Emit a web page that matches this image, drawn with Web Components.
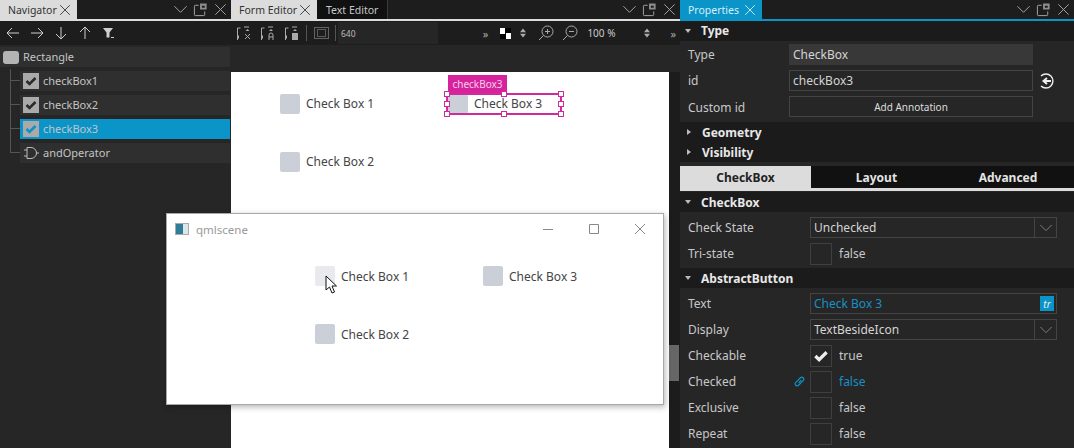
<!DOCTYPE html>
<html lang="en">
<head>
<meta charset="utf-8">
<title>Qt Design Studio</title>
<style>
  html, body { margin: 0; padding: 0; background: #1c1c1c; }
  body { width: 1074px; height: 448px; overflow: hidden; position: relative; font-family: "Noto Sans", "Liberation Sans", sans-serif; }
  #app { display: flex; height: 448px; }
</style>
</head>
<body>
<div id="app">
  <dock-panel style="width:231px">
    <dock-header slot="header" tab="Navigator" tone="light"></dock-header>
    <div style="display:flex;align-items:center;gap:8px;height:24px;padding-left:5px;background:#1d1d1d;flex:none" slot="tools">
      <ui-icon name="left"></ui-icon><ui-icon name="right"></ui-icon><ui-icon name="down"></ui-icon><ui-icon name="up"></ui-icon><ui-icon name="filter"></ui-icon>
    </div>
    <nav-tree>
      <nav-row root label="Rectangle"></nav-row>
      <nav-row icon="check" first label="checkBox1"></nav-row>
      <nav-row icon="check" label="checkBox2"></nav-row>
      <nav-row icon="check" selected label="checkBox3"></nav-row>
      <nav-row icon="gate" label="andOperator"></nav-row>
    </nav-tree>
  </dock-panel>

  <form-editor></form-editor>

  <dock-panel style="width:394px">
    <dock-header slot="header" tab="Properties" tone="blue"></dock-header>
    <prop-section label="Type" open style="--name-shift:-1px">
      <prop-row label="Type"><prop-field kind="plain" style="width:244px">CheckBox</prop-field></prop-row>
      <prop-row label="id"><prop-field style="width:244px">checkBox3</prop-field><ui-icon name="bind" size="20" style="margin-left:4px;color:#eee"></ui-icon></prop-row>
      <prop-row label="Custom id" style="--label-shift:1px"><prop-field kind="button" style="width:244px">Add Annotation</prop-field></prop-row>
    </prop-section>
    <prop-section label="Geometry"></prop-section>
    <prop-section label="Visibility"></prop-section>
    <prop-tabs></prop-tabs>
    <prop-section label="CheckBox" open wide>
      <prop-row label="Check State" wide><prop-field kind="combo" style="width:247px">Unchecked</prop-field></prop-row>
      <prop-row label="Tri-state" wide><prop-check>false</prop-check></prop-row>
    </prop-section>
    <prop-section label="AbstractButton" open wide>
      <prop-row label="Text" wide><prop-field kind="tr" style="width:247px">Check Box 3</prop-field></prop-row>
      <prop-row label="Display" wide><prop-field kind="combo" style="width:247px">TextBesideIcon</prop-field></prop-row>
      <prop-row label="Checkable" wide><prop-check checked>true</prop-check></prop-row>
      <prop-row label="Checked" wide linked><prop-check bound>false</prop-check></prop-row>
      <prop-row label="Exclusive" wide><prop-check>false</prop-check></prop-row>
      <prop-row label="Repeat" wide><prop-check>false</prop-check></prop-row>
    </prop-section>
  </dock-panel>
</div>
<qml-window></qml-window>

<script>
const ICONS = {
  left: '<path d="M14 8H2M7 3L2 8l5 5" fill="none" stroke="currentColor"/>',
  right: '<path d="M2 8h12M9 3l5 5-5 5" fill="none" stroke="currentColor"/>',
  down: '<path d="M8 2v12M3 9l5 5 5-5" fill="none" stroke="currentColor"/>',
  up: '<path d="M8 14V2M3 7l5-5 5 5" fill="none" stroke="currentColor"/>',
  filter: '<path d="M2 3h10L8.500 7.500v5h-3v-5z" fill="currentColor"/><path d="M10 12.500h3" stroke="currentColor"/>',
  chevron: '<path d="M1.500 4.500L8 11l6.500-6.500" fill="none" stroke="currentColor"/>',
  undock: '<path d="M6 3.500H2.500a1 1 0 0 0-1 1v9a1 1 0 0 0 1 1h9a1 1 0 0 0 1-1V10" fill="none" stroke="currentColor"/><path d="M7.500 1.500h7v6.500h-7zM9.500 4v2h3V4z" fill="currentColor" fill-rule="evenodd" opacity=".8"/>',
  close: '<path d="M2.500 2.500l11 11M13.500 2.500l-11 11" fill="none" stroke="currentColor"/>',
  check: '<path d="M3.500 8L6.500 11L12.500 5" fill="none" stroke="currentColor" stroke-width="2.600"/>',
  gate: '<path d="M1 5h3M1 11h3M13 8h3M4 2.500h4a5.500 5.500 0 0 1 0 11H4z" fill="none" stroke="currentColor"/>',
  bind: '<path d="M4 5a7 7 0 1 1 0 10" fill="none" stroke="currentColor" stroke-width="1.400"/><path d="M14 10H7M10 7l-3.500 3 3.500 3" fill="none" stroke="currentColor" stroke-width="2"/>',
  link: '<path d="M7 9.500l3-3M6.500 6.500l-2.500 2.500a2 2 0 0 0 3 3l2.500-2.500M9.500 9.500l2.500-2.500a2 2 0 0 0-3-3L6.500 6.500" fill="none" stroke="currentColor" stroke-width="1.300"/>',
  zoomin: '<circle cx="9.500" cy="6.500" r="5.500" fill="none" stroke="currentColor"/><path d="M5.500 10.500L1 15M7 6.500h5M9.500 4v5" fill="none" stroke="currentColor"/>',
  zoomout: '<circle cx="9.500" cy="6.500" r="5.500" fill="none" stroke="currentColor"/><path d="M5.500 10.500L1 15M7 6.500h5" fill="none" stroke="currentColor"/>',
  updown: '<path d="M8 2l4 5H4zM8 14l4-5H4z" fill="currentColor"/>',
  anchorx: '<path d="M1.500 15V3h3M8 2h5M9 9l5 5M14 9l-5 5" fill="none" stroke="currentColor"/><path d="M11.500 4l2 2h-4zM1 12l2-2v4z" fill="currentColor"/>',
  anchora: '<path d="M1.500 15V3h3M8 2h5M9 15v-5a2 2 0 0 1 4 0v5M9 12h4" fill="none" stroke="currentColor"/><path d="M11 4l2 2H9zM1 12l2-2v4z" fill="currentColor"/>',
  anchorb: '<path d="M1.500 15V3h3M8 2h5" fill="none" stroke="currentColor"/><path d="M8 8h6v7H8zM11 4l2 2H9zM1 12l2-2v4z" fill="currentColor"/>',
  frame: '<path d="M4.500 4.500h8v7h-8z" fill="none" stroke="currentColor" opacity=".45"/><path d="M1.500 2.500h14v11h-14z" fill="none" stroke="currentColor" stroke-dasharray="1 1"/>'
};

class UiIcon extends HTMLElement {
  connectedCallback() {
    const size = this.getAttribute('size') || 16;
    const viewBox = this.getAttribute('name') === 'bind' ? '0 0 20 20' : '0 0 16 16';
    this.attachShadow({ mode: 'open' }).innerHTML = `
      <style>:host { display: inline-flex; flex: none; color: #cfcfcf; } svg { display: block; }</style>
      <svg width="${size}" height="${size}" viewBox="${viewBox}">${ICONS[this.getAttribute('name')] || ''}</svg>`;
  }
}

// dock panel with header, tool strip and content
class DockPanel extends HTMLElement {
  constructor() {
    super();
    this.attachShadow({ mode: 'open' }).innerHTML = `
      <style>
        :host { display: flex; flex-direction: column; flex: none; height: 448px; background: #262626; box-sizing: border-box; overflow: hidden; }
      </style>
      <slot name="header"></slot><slot name="tools"></slot><slot></slot>`;
  }
}

class DockHeader extends HTMLElement {
  connectedCallback() {
    const blue = this.getAttribute('tone') === 'blue';
    const extra = this.getAttribute('extra');
    const width = this.getAttribute('tab') === 'Navigator' ? 77 : this.getAttribute('tab') === 'Form Editor' ? 86 : 82;
    this.attachShadow({ mode: 'open' }).innerHTML = `
      <style>
        :host { display: flex; align-items: stretch; flex: none; height: 21px; box-sizing: border-box; background: #1d1d1d; border-bottom: 2px solid ${blue ? '#0a94c8' : '#dcdcdc'}; font-size: 10.500px; }
        .tab { display: flex; align-items: center; justify-content: space-between; box-sizing: border-box; width: ${width}px; padding: 0 5px 0 8px; background: ${blue ? '#0a94c8' : '#dcdcdc'}; color: ${blue ? '#d8eef8' : '#333'}; }
        .tab ui-icon { color: inherit; }
        .other { display: flex; align-items: center; padding: 0 9px 0 9px; background: #111; color: #c8c8c8; border-right: 1px solid #3a3a3a; }
        .gap { flex: 1; }
        .ctl { display: flex; align-items: center; gap: 5px; padding-right: 3px; }
        .ctl ui-icon { color: #aaa; }
      </style>
      <div class="tab"><span>${this.getAttribute('tab')}</span><ui-icon name="close" size="14"></ui-icon></div>
      ${extra ? `<div class="other">${extra}</div>` : ''}
      <div class="gap"></div>
      <div class="ctl"><ui-icon name="chevron" size="15"></ui-icon><ui-icon name="undock" size="15"></ui-icon><ui-icon name="close" size="15"></ui-icon></div>`;
  }
}

class NavTree extends HTMLElement {
  constructor() {
    super();
    this.attachShadow({ mode: 'open' }).innerHTML = `
      <style>:host { display: flex; flex-direction: column; gap: 4px; padding-top: 2px; }</style><slot></slot>`;
  }
}

class NavRow extends HTMLElement {
  connectedCallback() {
    const root = this.hasAttribute('root');
    const selected = this.hasAttribute('selected');
    const first = this.hasAttribute('first');
    const icon = this.getAttribute('icon');
    const iconHtml = root ? '<span class="rect"></span>'
      : icon === 'check' ? `<span class="cb"><ui-icon name="check" size="16" style="color:${selected ? '#0a94c8' : '#2b2b2b'}"></ui-icon></span>`
      : '<span class="ic"><ui-icon name="gate" size="16" style="color:#bbb"></ui-icon></span>';
    this.attachShadow({ mode: 'open' }).innerHTML = `
      <style>
        :host { display: flex; align-items: center; height: 20px; position: relative; font-size: 11px; color: #c4c4c4; margin-left: ${root ? 0 : 20}px; margin-right: 1px; box-sizing: border-box; padding-left: 3px; background: ${selected ? '#0a94c8' : '#2f2f2f'}; }
        .rect { width: 16px; height: 13px; border-radius: 3px; background: #b4b4b4; }
        .cb { width: 16px; height: 16px; background: #aaa; display: flex; }
        .ic { width: 16px; height: 16px; }
        .lbl { margin-left: 4px; margin-top: -2px; }
        .tree { position: absolute; left: -10px; top: ${first ? -2 : -14}px; width: 10px; height: ${first ? 12 : 24}px; border-left: 1px solid #555; border-bottom: 1px solid #555; box-sizing: border-box; }
      </style>
      ${root ? '' : '<span class="tree"></span>'}
      ${iconHtml}<span class="lbl">${this.getAttribute('label')}</span>`;
  }
}

class CanvasItem extends HTMLElement {
  connectedCallback() {
    this.attachShadow({ mode: 'open' }).innerHTML = `
      <style>
        :host { display: flex; align-items: center; gap: 6px; font-size: 12px; color: #444; font-family: "Noto Sans", sans-serif; white-space: nowrap; }
        .box { width: 20px; height: 20px; border-radius: 2px; background: ${this.hasAttribute('pressed') ? '#e8eaed' : '#cbd0d8'}; }
        .txt { margin-top: var(--txt-shift, -1px); }
      </style>
      <span class="box"></span><span class="txt"><slot></slot></span>`;
  }
}

class SelectionBox extends HTMLElement {
  connectedCallback() {
    const spots = [[0,0],[50,0],[100,0],[0,50],[100,50],[0,100],[50,100],[100,100]];
    const handles = spots.map(([x, y]) => `<i style="left:calc(${x}% + ${x / 50 - 1}px);top:calc(${y}% + ${y / 50 - 1}px)"></i>`).join('');
    this.attachShadow({ mode: 'open' }).innerHTML = `
      <style>
        :host { position: absolute; box-sizing: border-box; border: 2px solid #cf2a9e; }
        i { position: absolute; width: 6px; height: 6px; margin: -3px 0 0 -3px; background: #fff; border: 1px solid #cf2a9e; box-sizing: border-box; }
        .tag { position: absolute; left: 0; top: -20px; height: 18px; width: 59px; background: #d6239c; color: #f6cfe8; font-size: 10px; display: flex; align-items: center; justify-content: center; }
      </style>
      <span class="tag">${this.getAttribute('label')}</span>${handles}`;
  }
}

class FormEditor extends HTMLElement {
  constructor() {
    super();
    this.attachShadow({ mode: 'open' }).innerHTML = `
      <style>
        :host { display: flex; flex-direction: column; flex: none; width: 449px; height: 448px; background: #262626; }
        .tools { display: flex; align-items: center; height: 24px; flex: none; background: #1d1d1d; padding-left: 5px; box-sizing: border-box; }
        .tools ui-icon { color: #aaa; }
        .group { display: flex; gap: 8px; align-items: center; }
        .sep { width: 1px; height: 16px; background: #555; margin: 0 6px; }
        .num { font-size: 8.500px; color: #bbb; background: #262626; width: 100px; height: 22px; display: flex; align-items: center; padding-left: 3px; box-sizing: border-box; }
        .gap { flex: 1; }
        .chev { font-size: 11px; color: #aaa; }
        .bw { width: 11px; height: 11px; margin: 0 6px 0 12px; background: conic-gradient(#000 0 25%, #fff 0 50%, #000 0 75%, #fff 0); }
        .pct { font-size: 10px; color: #ccc; margin-left: 9px; width: 54px; }
        .band { height: 27px; flex: none; }
        .stage { flex: 1; display: flex; }
        .canvas { flex: 1; background: #fff; position: relative; }
        canvas-item, selection-box { position: absolute; }
      </style>
      <dock-header tab="Form Editor" extra="Text Editor"></dock-header>
      <div class="tools">
        <div class="group"><ui-icon name="anchorx"></ui-icon><ui-icon name="anchora"></ui-icon><ui-icon name="anchorb"></ui-icon></div>
        <span class="sep"></span><ui-icon name="frame"></ui-icon><span class="sep" style="margin-right:2px"></span>
        <span class="num">640</span>
        <span class="gap"></span>
        <span class="chev">»</span>
        <span class="bw"></span>
        <ui-icon name="updown" size="12"></ui-icon>
        <ui-icon name="zoomin" size="16" style="margin-left:9px"></ui-icon>
        <ui-icon name="zoomout" size="16" style="margin-left:8px"></ui-icon>
        <span class="pct">100 %</span>
        <ui-icon name="updown" size="12"></ui-icon>
        <span class="chev" style="margin:0 4px 0 17px">»</span>
      </div>
      <div class="band"></div>
      <div class="stage">
        <div class="canvas">
          <canvas-item style="left:49px;top:22px">Check Box 1</canvas-item>
          <canvas-item style="left:49px;top:80px">Check Box 2</canvas-item>
          <canvas-item style="left:217px;top:22px">Check Box 3</canvas-item>
          <selection-box label="checkBox3" style="left:215px;top:21px;width:116px;height:22px"></selection-box>
        </div>
        <scroll-strip></scroll-strip>
      </div>`;
  }
}

class ScrollStrip extends HTMLElement {
  constructor() {
    super();
    this.attachShadow({ mode: 'open' }).innerHTML = `
      <style>
        :host { display: block; flex: none; width: 11px; background: #1c1c1c; position: relative; }
        .thumb { position: absolute; left: 0; top: 273px; width: 10px; height: 36px; background: #666; }
      </style><span class="thumb"></span>`;
  }
}

class PropSection extends HTMLElement {
  connectedCallback() {
    const open = this.hasAttribute('open');
    const wide = this.hasAttribute('wide');
    this.attachShadow({ mode: 'open' }).innerHTML = `
      <style>
        :host { display: block; flex: none; font-size: 12px; }
        .head { display: flex; align-items: center; height: 20px; background: #1b1b1b; color: #e8e8e8; font-weight: 700; font-size: 12px; padding-left: 5px; }
        .tri { width: 0; height: 0; border-style: solid; ${open ? 'margin-right: 10px; border-width: 4px 3.500px 0; border-color: #bbb transparent transparent;' : 'border-width: 3.500px 0 3.500px 4px; border-color: transparent transparent transparent #bbb; margin-left: 2px; margin-right: 11px;'} }
        .name { margin-top: var(--name-shift, 0); }
        .body { display: ${open ? 'flex' : 'none'}; flex-direction: column; gap: 5px; padding: ${wide ? '5px 0 4px' : '3px 0 5px'}; background: #262626; }
      </style>
      <div class="head"><span class="tri"></span><span class="name">${this.getAttribute('label')}</span></div>
      <div class="body"><slot></slot></div>`;
  }
}

class PropRow extends HTMLElement {
  connectedCallback() {
    const wide = this.hasAttribute('wide');
    this.attachShadow({ mode: 'open' }).innerHTML = `
      <style>
        :host { display: flex; align-items: center; height: 21px; padding-left: 8px; color: #c8c8c8; font-size: 12px; }
        .lbl { width: ${wide ? 122 : 101}px; flex: none; position: relative; top: var(--label-shift, 0); }
        .lnk { position: absolute; right: 3px; top: 1px; }
      </style>
      <span class="lbl">${this.getAttribute('label')}${this.hasAttribute('linked') ? '<ui-icon class="lnk" name="link" size="15" style="color:#0a94c8"></ui-icon>' : ''}</span><slot></slot>`;
  }
}

class PropField extends HTMLElement {
  connectedCallback() {
    const kind = this.getAttribute('kind') || 'input';
    const suffix = kind === 'combo' ? '<span class="arrow"><ui-icon name="chevron" size="14" style="color:#888"></ui-icon></span>'
      : kind === 'tr' ? '<span class="tr">tr</span>' : '';
    this.attachShadow({ mode: 'open' }).innerHTML = `
      <style>
        :host { display: flex; align-items: center; box-sizing: border-box; height: 21px; flex: none; padding-left: 3px; font-size: 12px; position: relative;
          color: ${kind === 'tr' ? '#1a8fc4' : '#d4d4d4'};
          background: ${kind === 'plain' ? '#383838' : '#262626'};
          border: 1px solid ${kind === 'plain' ? '#383838' : '#444'}; }
        :host([kind="button"]) { justify-content: center; padding: 0; font-size: 10px; color: #ddd; }
        .arrow { position: absolute; right: 0; top: 0; bottom: 0; width: 21px; border-left: 1px solid #444; display: flex; align-items: center; justify-content: center; }
        .tr { position: absolute; right: 2px; top: 2px; width: 14px; height: 15px; background: #0a94c8; color: #eee; font-size: 10px; font-style: italic; display: flex; align-items: center; justify-content: center; }
      </style><slot></slot>${suffix}`;
  }
}

class PropCheck extends HTMLElement {
  connectedCallback() {
    this.attachShadow({ mode: 'open' }).innerHTML = `
      <style>
        :host { display: flex; align-items: center; gap: 7px; color: ${this.hasAttribute('bound') ? '#1a8fc4' : '#c8c8c8'}; font-size: 12px; }
        .box { width: 22px; height: 22px; box-sizing: border-box; border: 1px solid #3f3f3f; display: flex; align-items: center; justify-content: center; }
      </style>
      <span class="box">${this.hasAttribute('checked') ? '<ui-icon name="check" size="20" style="color:#eee"></ui-icon>' : ''}</span><slot></slot>`;
  }
}

class PropTabs extends HTMLElement {
  constructor() {
    super();
    this.attachShadow({ mode: 'open' }).innerHTML = `
      <style>
        :host { display: flex; flex: none; height: 25px; margin: 4px 0 1px; box-sizing: border-box; border-bottom: 3px solid #dcdcdc; background: #111; color: #e4e4e4; font-size: 12px; font-weight: 700; }
        span { display: flex; align-items: center; justify-content: center; width: 131px; }
        .on { background: #dcdcdc; color: #222; }
      </style>
      <span class="on">CheckBox</span><span>Layout</span><span style="width:132px">Advanced</span>`;
  }
}

class QmlWindow extends HTMLElement {
  constructor() {
    super();
    this.attachShadow({ mode: 'open' }).innerHTML = `
      <style>
        :host { position: absolute; left: 166px; top: 213px; width: 498px; height: 192px; box-sizing: border-box; background: #fff; border: 1px solid #a8a8a8; box-shadow: 1px 2px 6px rgba(0,0,0,.3); --txt-shift: 1px; }
        .title { display: flex; align-items: center; height: 30px; padding-left: 8px; gap: 7px; font-size: 11.500px; color: #999; }
        .app { width: 14px; height: 12px; border: 1px solid #aaa; box-sizing: border-box; background: linear-gradient(90deg, #2f7d96 0 55%, #dfe6ea 55%); }
        .gap { flex: 1; }
        .ctls { display: flex; }
        .ctl { display: flex; align-items: center; width: 46px; justify-content: center; color: #888; }
        canvas-item { position: absolute; }
        svg.cursor { position: absolute; left: 158px; top: 61px; }
      </style>
      <div class="title"><span class="app"></span><span>qmlscene</span><span class="gap"></span>
        <span class="ctls">
          <span class="ctl"><svg width="12" height="12" viewBox="0 0 12 12"><path d="M1 6.500h10" stroke="currentColor"/></svg></span>
          <span class="ctl"><svg width="12" height="12" viewBox="0 0 12 12"><path d="M1.500 1.500h9v9h-9z" fill="none" stroke="currentColor"/></svg></span>
          <span class="ctl"><svg width="12" height="12" viewBox="0 0 12 12"><path d="M1 1l10 10M11 1L1 11" fill="none" stroke="currentColor"/></svg></span>
        </span>
      </div>
      <canvas-item pressed style="left:148px;top:52px">Check Box 1</canvas-item>
      <canvas-item style="left:148px;top:110px">Check Box 2</canvas-item>
      <canvas-item style="left:316px;top:52px">Check Box 3</canvas-item>
      <svg class="cursor" width="13" height="20" viewBox="0 0 13 20"><path d="M1 1v14l3.500-3 2.500 6 2.500-1-2.500-6h4.500z" fill="#fff" stroke="#111"/></svg>`;
  }
}

customElements.define('ui-icon', UiIcon);
customElements.define('dock-panel', DockPanel);
customElements.define('dock-header', DockHeader);
customElements.define('nav-tree', NavTree);
customElements.define('nav-row', NavRow);
customElements.define('canvas-item', CanvasItem);
customElements.define('selection-box', SelectionBox);
customElements.define('form-editor', FormEditor);
customElements.define('scroll-strip', ScrollStrip);
customElements.define('prop-section', PropSection);
customElements.define('prop-row', PropRow);
customElements.define('prop-field', PropField);
customElements.define('prop-check', PropCheck);
customElements.define('prop-tabs', PropTabs);
customElements.define('qml-window', QmlWindow);
</script>
</body>
</html>
